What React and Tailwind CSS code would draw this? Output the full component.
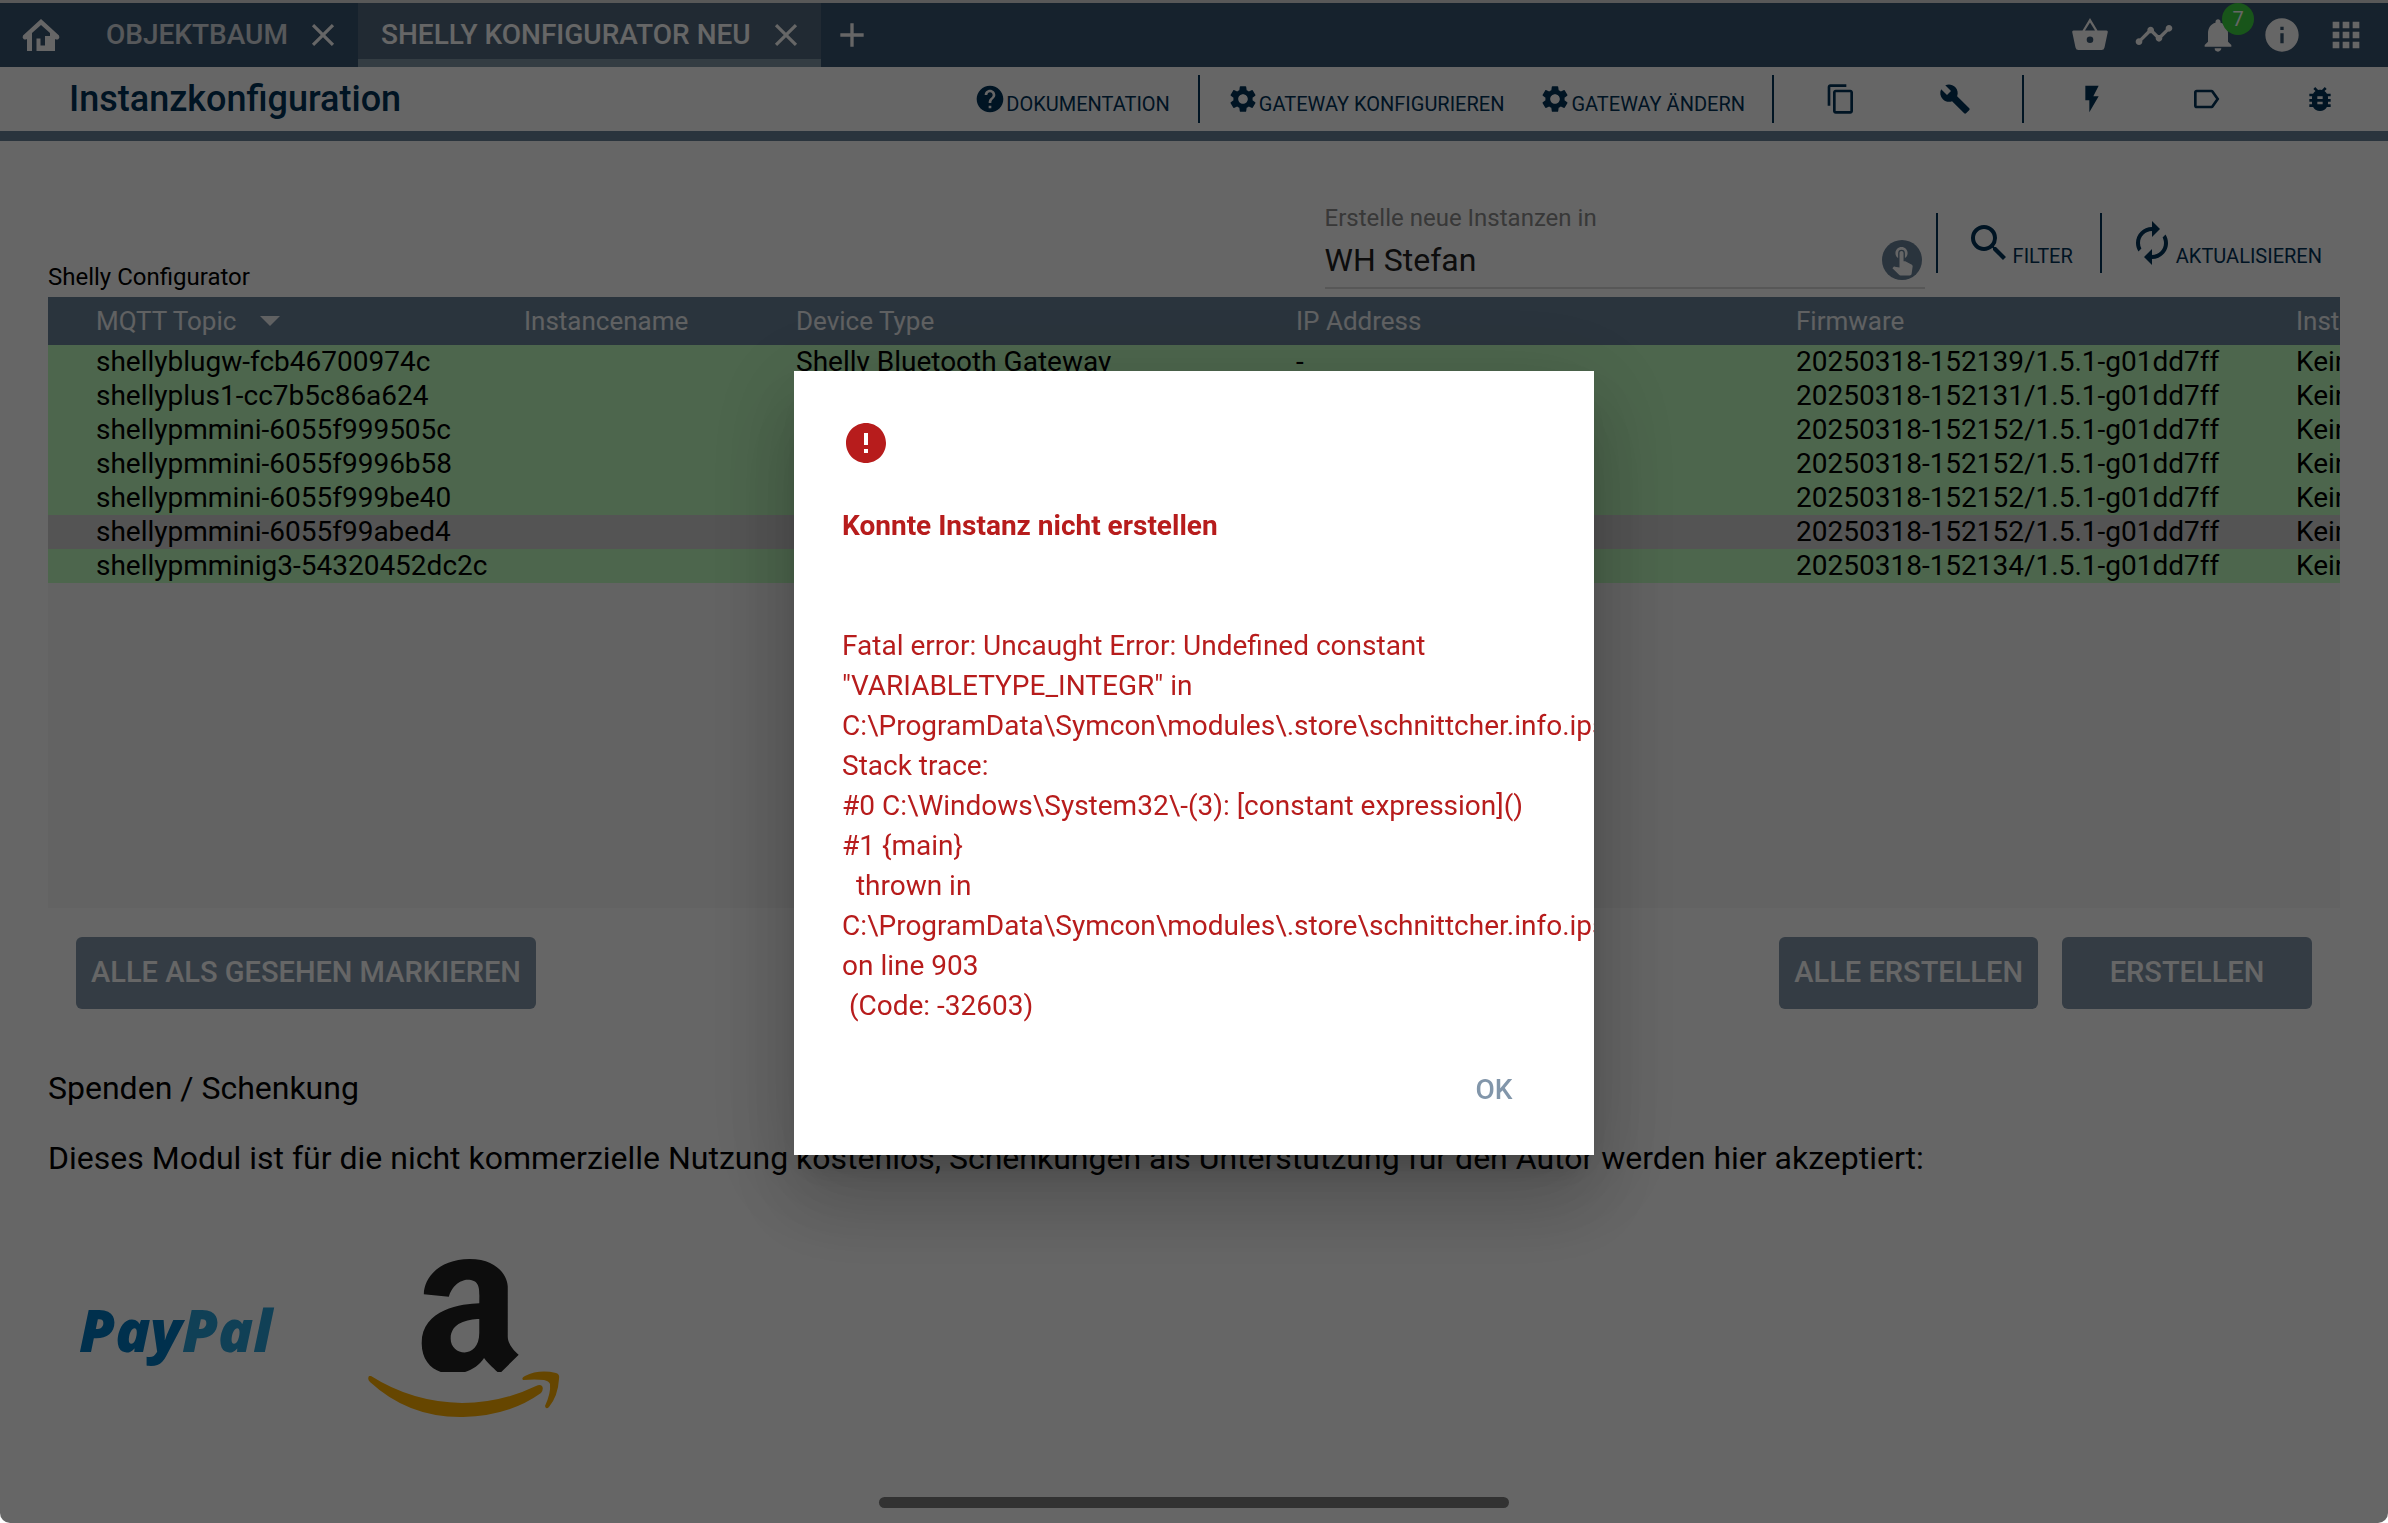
import React from "react";
import { FaAmazon } from "react-icons/fa";
import {
  MdTimeline,
  MdNotifications,
  MdInfo,
  MdApps,
  MdHelp,
  MdSettings,
  MdContentCopy,
  MdBuild,
  MdFlashOn,
  MdLabelOutline,
  MdBugReport,
  MdSearch,
  MdAutorenew,
  MdError,
  MdClose,
  MdAdd,
} from "react-icons/md";

const rows = [
  { topic: "shellyblugw-fcb46700974c", type: "Shelly Bluetooth Gateway", ip: "-", fw: "20250318-152139/1.5.1-g01dd7ff" },
  { topic: "shellyplus1-cc7b5c86a624", fw: "20250318-152131/1.5.1-g01dd7ff" },
  { topic: "shellypmmini-6055f999505c", fw: "20250318-152152/1.5.1-g01dd7ff" },
  { topic: "shellypmmini-6055f9996b58", fw: "20250318-152152/1.5.1-g01dd7ff" },
  { topic: "shellypmmini-6055f999be40", fw: "20250318-152152/1.5.1-g01dd7ff" },
  { topic: "shellypmmini-6055f99abed4", fw: "20250318-152152/1.5.1-g01dd7ff", selected: true },
  { topic: "shellypmminig3-54320452dc2c", fw: "20250318-152134/1.5.1-g01dd7ff" },
];

const errorText = [
  "Fatal error: Uncaught Error: Undefined constant",
  '"VARIABLETYPE_INTEGR" in',
  "C:\\ProgramData\\Symcon\\modules\\.store\\schnittcher.info.ips",
  "Stack trace:",
  "#0 C:\\Windows\\System32\\-(3): [constant expression]()",
  "#1 {main}",
  "  thrown in",
  "C:\\ProgramData\\Symcon\\modules\\.store\\schnittcher.info.ips",
  "on line 903",
  " (Code: -32603)",
].join("\n");

function HomeIcon() {
  return (
    <svg viewBox="0 0 38 34" className="h-[34px] w-[38px]" fill="currentColor" aria-hidden="true">
      <path
        fillRule="evenodd"
        d="M19 1 L37 17.500 Q38 19.500 36.500 21 Q35 22 33 21 V33 H14.500 V20.500 H18.500 V27.500 H23 V18 H28 V15 L19 7 L10 15 V33 H5 V21 Q3 22 1.500 21 Q0 19.500 1 17.500 Z"
      />
    </svg>
  );
}

function BasketIcon() {
  return (
    <svg viewBox="0 0 40 40" className="size-10" fill="currentColor" aria-hidden="true">
      <path
        fillRule="evenodd"
        d="M20 3 L27.500 15.500 H36.500 Q38 15.500 37.800 17 L34.500 32.500 Q34 35 31.500 35 H8.500 Q6 35 5.500 32.500 L2.200 17 Q2 15.500 3.500 15.500 H12.500 Z M20 7.500 L15 15.500 H25 Z M20 21.500 A3.300 3.300 0 1 0 20 28.100 A3.300 3.300 0 1 0 20 21.500 Z"
      />
    </svg>
  );
}

function TouchIcon() {
  return (
    <svg viewBox="0 0 40 40" className="size-10" aria-hidden="true">
      <circle cx="20" cy="20" r="20" fill="#698298" />
      <g transform="translate(4 3) scale(1.35)">
        <path
          fill="#ffffff"
          d="M9 11.240V7.500a2.500 2.500 0 0 1 5 0v3.740c1.210-.81 2-2.180 2-3.740C16 5.010 13.990 3 11.500 3S7 5.010 7 7.500c0 1.560.79 2.930 2 3.740zm9.840 4.630l-4.540-2.260c-.17-.07-.35-.11-.54-.11H13v-6c0-.83-.67-1.500-1.500-1.500S10 6.670 10 7.500v10.740l-3.430-.72c-.08-.01-.15-.03-.24-.03-.31 0-.59.13-.79.330l-.79.800 4.940 4.940c.27.270.65.440 1.060.440h6.790c.75 0 1.330-.55 1.440-1.280l.75-5.270c.01-.07.020-.14.020-.2 0-.62-.38-1.160-.91-1.380z"
        />
      </g>
    </svg>
  );
}

function ToolButton({ icon: Icon, children }) {
  return (
    <button type="button" className="flex h-12 items-center text-xl">
      <Icon className="size-8" aria-hidden="true" />
      <span className="pt-[10px]">{children}</span>
    </button>
  );
}

function IconButton({ icon: Icon, label }) {
  return (
    <button type="button" aria-label={label} className="flex w-[114px] justify-center">
      <Icon className="size-8" />
    </button>
  );
}

function Divider({ className }) {
  return <span className={`w-0.5 bg-[#003258] ${className}`} />;
}

function ActionButton({ children, className = "" }) {
  return (
    <button
      type="button"
      className={`h-[72px] rounded-md bg-[#8296aa] px-[15px] pb-0.5 text-[29px] leading-[34px] font-medium whitespace-nowrap text-white ${className}`}
    >
      {children}
    </button>
  );
}

function TopBar() {
  return (
    <header className="flex h-16 items-stretch bg-[#395570] text-white">
      <button type="button" aria-label="Home" className="flex w-[82px] items-center justify-center">
        <HomeIcon />
      </button>
      <nav className="flex items-stretch text-[28px] font-medium" aria-label="Tabs">
        <div className="flex w-[276px] items-center justify-between pr-4 pl-6 text-white/80">
          <a href="#objektbaum">OBJEKTBAUM</a>
          <button type="button" aria-label="Objektbaum schließen">
            <MdClose className="size-[38px] text-white" />
          </button>
        </div>
        <div className="flex w-[463px] items-center justify-between border-b-8 border-[#8298a8] bg-[#546a7f] pt-2 pr-4 pl-[23px]">
          <a href="#shelly" aria-current="page">SHELLY KONFIGURATOR NEU</a>
          <button type="button" aria-label="Shelly Konfigurator schließen">
            <MdClose className="size-[38px]" />
          </button>
        </div>
      </nav>
      <button type="button" aria-label="Neuer Tab" className="flex w-[62px] items-center justify-center">
        <MdAdd className="size-[40px]" />
      </button>
      <div className="ml-auto flex items-center pr-[10px]">
        <button type="button" aria-label="Store" className="flex w-16 justify-center"><BasketIcon /></button>
        <button type="button" aria-label="Graphen" className="flex w-16 justify-center"><MdTimeline className="size-10" /></button>
        <button type="button" aria-label="Benachrichtigungen" className="relative flex w-16 justify-center">
          <MdNotifications className="size-10" />
          <span className="absolute -top-3 -right-1 flex size-8 items-center justify-center rounded-full bg-[#3ed441] text-xl">7</span>
        </button>
        <button type="button" aria-label="Information" className="flex w-16 justify-center"><MdInfo className="size-10" /></button>
        <button type="button" aria-label="Apps" className="flex w-16 justify-center"><MdApps className="size-10" /></button>
      </div>
    </header>
  );
}

function TitleBar() {
  return (
    <div className="flex h-[74px] items-center justify-between border-b-10 border-[#698298] pl-[69px] text-[#003258]">
      <h1 className="text-[36px] leading-10 font-medium">Instanzkonfiguration</h1>
      <div className="flex items-center">
        <div className="px-7"><ToolButton icon={MdHelp}>DOKUMENTATION</ToolButton></div>
        <Divider className="h-12" />
        <div className="flex gap-[35px] px-[27px]">
          <ToolButton icon={MdSettings}>GATEWAY KONFIGURIEREN</ToolButton>
          <ToolButton icon={MdSettings}>GATEWAY ÄNDERN</ToolButton>
        </div>
        <Divider className="h-12" />
        <div className="flex px-[10px]">
          <IconButton icon={MdContentCopy} label="Kopieren" />
          <IconButton icon={MdBuild} label="Werkzeug" />
        </div>
        <Divider className="h-12" />
        <div className="flex px-[11px]">
          <IconButton icon={MdFlashOn} label="Ereignisse" />
          <IconButton icon={MdLabelOutline} label="Label" />
          <IconButton icon={MdBugReport} label="Debug" />
        </div>
      </div>
    </div>
  );
}

function ListHeader() {
  return (
    <div className="flex h-[156px] items-end justify-between">
      <h2 className="pb-1.5 text-2xl leading-7">Shelly Configurator</h2>
      <div className="flex items-start pr-[18px]">
        <div className="mr-[11px] flex h-[93px] w-[600px] flex-col">
          <label htmlFor="parent" className="text-2xl leading-7 text-[#8c8c8c]">Erstelle neue Instanzen in</label>
          <div className="flex h-[57px] items-center border-b-2 border-[#dadada] pr-[3px]">
            <input id="parent" defaultValue="WH Stefan" className="min-w-0 flex-1 bg-transparent text-[32px] leading-10 text-[#212121] outline-none" />
            <button type="button" aria-label="Auswählen"><TouchIcon /></button>
          </div>
        </div>
        <div className="flex items-center pt-[9px] text-xl text-[#003258]">
          <Divider className="h-[60px]" />
          <button type="button" className="flex items-center px-[27px]">
            <MdSearch className="size-12" aria-hidden="true" />
            <span className="pt-[26px]">FILTER</span>
          </button>
          <Divider className="h-[60px]" />
          <button type="button" className="flex items-center pl-[26px]">
            <MdAutorenew className="size-12" aria-hidden="true" />
            <span className="pt-[26px]">AKTUALISIEREN</span>
          </button>
        </div>
      </div>
    </div>
  );
}

function DeviceTable() {
  const cell = "p-0 pl-12 text-left font-normal whitespace-nowrap";
  return (
    <div className="h-[611px] overflow-hidden bg-[#f7f7f7]">
      <table className="w-full table-fixed border-collapse">
        <colgroup>
          <col className="w-[428px]" />
          <col className="w-[272px]" />
          <col className="w-[500px]" />
          <col className="w-[500px]" />
          <col className="w-[500px]" />
          <col />
        </colgroup>
        <thead>
          <tr className="h-12 bg-[#698298] text-[26px] leading-8 text-white/90">
            <th className={cell} scope="col">
              <span className="flex items-center gap-6">
                MQTT Topic
                <svg viewBox="0 0 20 10" className="h-[10px] w-5" fill="currentColor" aria-hidden="true">
                  <path d="M0 0h20L10 10z" />
                </svg>
              </span>
            </th>
            <th className={cell} scope="col">Instancename</th>
            <th className={cell} scope="col">Device Type</th>
            <th className={cell} scope="col">IP Address</th>
            <th className={cell} scope="col">Firmware</th>
            <th className={cell} scope="col">Inst</th>
          </tr>
        </thead>
        <tbody className="text-[28px] leading-[34px]">
          {rows.map((r) => (
            <tr key={r.topic} className={r.selected ? "bg-[#d2d2d2]" : "bg-[#c0ffc0]"}>
              <td className={cell}>{r.topic}</td>
              <td className={cell}></td>
              <td className={cell}>{r.type}</td>
              <td className={cell}>{r.ip}</td>
              <td className={cell}>{r.fw}</td>
              <td className={cell}>Kein</td>
            </tr>
          ))}
        </tbody>
      </table>
    </div>
  );
}

function PayPalLogo() {
  return (
    <svg viewBox="0 0 200 70" className="h-[70px] w-[200px]" role="img" aria-label="PayPal">
      <text x="3" y="50" fontFamily="'Open Sans', sans-serif" fontWeight="800" fontStyle="italic" fontSize="58">
        <tspan fill="#0079c1">Pay</tspan>
        <tspan fill="#29a0d8">Pal</tspan>
      </text>
    </svg>
  );
}

function AmazonLogo() {
  return (
    <svg viewBox="0 0 200 170" className="h-[170px] w-[200px]" role="img" aria-label="Amazon">
      <svg x="17" y="-4" width="139" height="124">
        <FaAmazon size={174} color="#212121" />
      </svg>
      <g transform="translate(3 0)" fill="#ffaf00">
        <path d="M2 124 Q0 127 3 130 Q42 166 96 165 Q142 164 174 141 Q177 137 175 134 Q173 132 169 134 Q134 151 95 151 Q45 150 4 124 Z" />
        <path d="M156 128 Q154 126 158 124 Q172 117 189 121 Q193 122 192 127 Q191 144 182 155 Q179 158 178 154 Q184 141 183 132 Q182 129 177 128 Q168 127 156 128 Z" />
      </g>
    </svg>
  );
}

function ErrorDialog() {
  return (
    <div className="fixed inset-0 flex items-center justify-center rounded-b-[10px] bg-black/60 pt-[3px]">
      <div
        role="alertdialog"
        aria-modal="true"
        aria-labelledby="dialog-title"
        className="flex w-[800px] flex-col overflow-hidden bg-white px-12 pt-12 pb-[29px] text-[28px] leading-10 text-[#b71c1c] shadow-[0_22px_30px_-14px_rgba(0,0,0,0.2),0_48px_76px_6px_rgba(0,0,0,0.14),0_18px_92px_16px_rgba(0,0,0,0.12)]"
      >
        <MdError className="size-12" aria-hidden="true" />
        <h2 id="dialog-title" className="pt-[39px] font-bold">Konnte Instanz nicht erstellen</h2>
        <p className="pt-20 whitespace-pre">{errorText}</p>
        <button type="button" className="mt-7 mr-4 flex h-[72px] w-[72px] items-center justify-center self-end font-medium text-[#8296aa]">
          OK
        </button>
      </div>
    </div>
  );
}

export default function App() {
  return (
    <div className="flex min-h-screen flex-col bg-white font-['Roboto',sans-serif] text-black">
      <div className="h-[3px] bg-[#dcdcdc]" />
      <TopBar />
      <TitleBar />
      <main className="px-12">
        <ListHeader />
        <DeviceTable />
        <div className="flex items-center gap-6 px-7 pt-[29px]">
          <ActionButton className="mr-auto">ALLE ALS GESEHEN MARKIEREN</ActionButton>
          <ActionButton>ALLE ERSTELLEN</ActionButton>
          <ActionButton className="w-[250px]">ERSTELLEN</ActionButton>
        </div>
        <div className="flex flex-col gap-[30px] pt-[59px] text-[32px] leading-10">
          <p>Spenden / Schenkung</p>
          <p>Dieses Modul ist für die nicht kommerzielle Nutzung kostenlos, Schenkungen als Unterstützung für den Autor werden hier akzeptiert:</p>
        </div>
        <div className="flex items-center gap-[88px] pt-[74px] pl-7">
          <a href="#paypal"><PayPalLogo /></a>
          <a href="#amazon"><AmazonLogo /></a>
        </div>
      </main>
      <div className="mx-auto mt-auto mb-[15px] h-[11px] w-[630px] rounded-full bg-[#7d7d7d]" />
      <ErrorDialog />
    </div>
  );
}
